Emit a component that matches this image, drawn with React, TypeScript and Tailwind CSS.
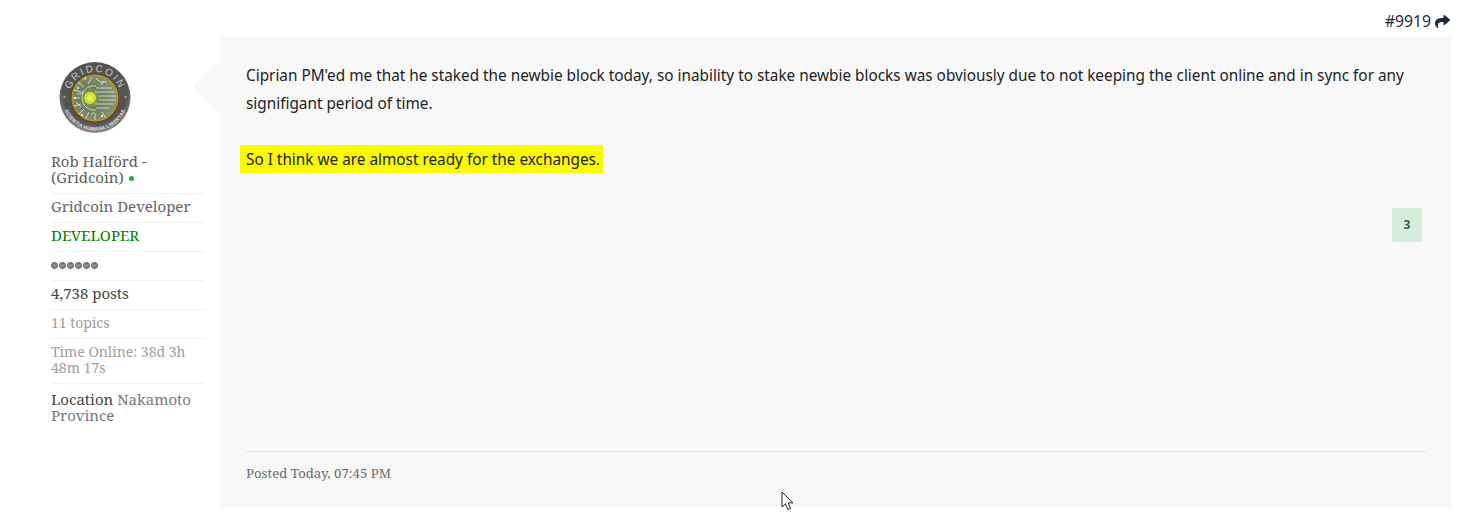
import { FaShare } from "react-icons/fa";

const serif = "font-['Noto_Serif','Liberation_Serif',serif]";

function Avatar() {
  return (
    <svg viewBox="0 0 74 74" className="w-[74px] h-[74px]">
      <defs>
        <radialGradient id="rim" cx="50%" cy="42%" r="60%">
          <stop offset="0%" stopColor="#5a5858" />
          <stop offset="75%" stopColor="#545252" />
          <stop offset="100%" stopColor="#959595" />
        </radialGradient>
        <radialGradient id="core" cx="40%" cy="50%" r="65%">
          <stop offset="0%" stopColor="#a8bb4e" />
          <stop offset="35%" stopColor="#6a7d5c" />
          <stop offset="100%" stopColor="#8c9a80" />
        </radialGradient>
        <path id="top" d="M11 37a26 26 0 0 1 52 0" />
        <path id="bot" d="M4.500 37a32.500 32.500 0 0 0 65 0" />
      </defs>
      <circle cx="37" cy="36.500" r="35.500" fill="url(#rim)" />
      <circle cx="37" cy="37" r="24.200" fill="#2a261c" />
      <circle cx="37" cy="37" r="22.800" fill="url(#core)" stroke="#c08f18" strokeWidth="1.800" />
      <g stroke="#eef2e4" strokeWidth="0.9" fill="none" opacity="0.85">
        <path d="M38 27h16M37 31h20M41 35h17M41 39h17M37 43h19M38 47h13" />
        <path d="M38 25c-9-1-14 5-14 12s6 13 14 12" />
        <path d="M30 23l4-7M26 26l-6-5M23 31l-7-2M22 37h-7M23 43l-7 2M26 48l-5 5M31 51l-3 6M37 52v7M44 51l4 6" />
        <path d="M38 17l4 4h7M46 20l-3 4M18 41l5 5M19 33h4l2-3M33 54l3-3" />
      </g>
      <g fill="#e8eedc" opacity="0.75">
        <circle cx="20" cy="27" r="1.300" />
        <circle cx="27" cy="17.500" r="1.300" />
        <circle cx="17" cy="37" r="1.300" />
        <circle cx="24" cy="54" r="1.300" />
        <circle cx="44" cy="55" r="1.300" />
      </g>
      <circle cx="32" cy="37" r="6" fill="#cfe02f" />
      <circle cx="32" cy="37" r="3" fill="#e6f05a" />
      <text fontSize="10" fill="#c8c8c8" fontFamily="Liberation Sans, sans-serif" letterSpacing="1.800" textAnchor="middle">
        <textPath href="#top" startOffset="50%">GRIDCOIN</textPath>
      </text>
      <text fontSize="4.800" fill="#e4e4e4" fontFamily="Liberation Sans, sans-serif" fontWeight="700" letterSpacing="0.300" textAnchor="middle">
        <textPath href="#bot" startOffset="50%">SCIENTIA HUMANA LIBERTAS</textPath>
      </text>
      <circle cx="6.500" cy="36" r="1.200" fill="#c8a03c" />
      <circle cx="67.500" cy="36" r="1.200" fill="#c8a03c" />
    </svg>
  );
}

function Pips() {
  return (
    <div className="flex gap-px h-[16px] items-center">
      {[0, 1, 2, 3, 4, 5].map((i) => (
        <span key={i} className="w-[7px] h-[7px] rounded-full bg-[#8a8a8a] border border-[#555]" />
      ))}
    </div>
  );
}

function Row({ children, className = "" }: { children: React.ReactNode; className?: string }) {
  return <li className={`border-b border-[#f0f0f0] ${className}`}>{children}</li>;
}

export default function App() {
  return (
    <div className="w-[1461px] h-[520px] bg-white relative overflow-hidden font-['Noto_Sans',sans-serif] text-[#222b38]">
      <div className="h-[37px] pr-[10px] flex items-end justify-end pb-[5px] text-[15.700px] leading-[22px]">
        #9919
        <FaShare className="w-[17px] h-[15px] ml-[3px] mb-[3px] text-[#1e2a3a]" />
      </div>

      <div className="flex">
        <aside className={`w-[220px] shrink-0 pl-[51px] pr-[15px] pt-[24px] ${serif} text-[15px] leading-[16px] text-[#666]`}>
          <div className="pl-[7px] h-[87px]">
            <Avatar />
          </div>
          <ul>
            <Row className="pt-[5px] pb-[8px]">
              <span className="text-[#5d5d5d]">Rob Halförd - (Gridcoin)</span>{" "}
              <span className="inline-block w-[5px] h-[5px] rounded-full bg-[#28a745] align-middle ml-px" />
            </Row>
            <Row className="pt-[4px] pb-[8px]">Gridcoin Developer</Row>
            <Row className="pt-[4px] pb-[8px] text-[#008000]">DEVELOPER</Row>
            <Row className="pt-[5px] pb-[7px]"><Pips /></Row>
            <Row className="pt-[4px] pb-[8px] text-[#444]">4,738 posts</Row>
            <Row className="pt-[5px] pb-[7px] text-[14px] text-[#a0a0a0]">11 topics</Row>
            <Row className="pt-[5px] pb-[7px] text-[14px] text-[#a0a0a0]">Time Online: 38d 3h 48m 17s</Row>
            <li className="pt-[7px] text-[#777]">
              <span className="text-[#444]">Location</span> Nakamoto Province
            </li>
          </ul>
        </aside>

        <main className="relative w-[1231px] h-[470px] bg-[#f8f8f8] rounded-[2px] pl-[26px] pr-[25px] pt-[24px] flex flex-col">
          <span className="absolute left-[-27px] top-[23px] w-0 h-0 border-y-[27px] border-y-transparent border-r-[27px] border-r-[#f8f8f8]" />
          <div className="text-[15.340px] leading-[28px] text-[#222]">
            <p>
              Ciprian PM'ed me that he staked the newbie block today, so inability to stake newbie blocks was obviously due to not keeping the client online and in sync for any signifigant period of time.
            </p>
            <p className="mt-[28px]">
              <span className="bg-[#faf900] -ml-[6px] pl-[6px] pr-[3px] py-[4px]">So I think we are almost ready for the exchanges.</span>
            </p>
          </div>
          <div className="flex justify-end pr-[4px] mt-[35px]">
            <span className="w-[30px] h-[34px] rounded-[2px] bg-[#d4edda] flex items-center justify-center text-[12px] font-bold text-[#4b5b4f]">3</span>
          </div>
          <div className={`mt-auto mb-[24px] border-t border-[#e4e4e4] pt-[12px] pb-[1px] ${serif} text-[13.200px] leading-[18px] text-[#6a6a6a]`}>
            Posted Today, 07:45 PM
          </div>
        </main>
      </div>

      <svg viewBox="0 0 14 21" className="absolute left-[781px] top-[491px] w-[14px] h-[21px]">
        <path d="M1 1v15l3.500-3.200 2.300 5.700 2.800-1.100-2.400-5.500H12z" fill="#fff" stroke="#222" strokeWidth="1" strokeLinejoin="round" />
      </svg>
    </div>
  );
}
